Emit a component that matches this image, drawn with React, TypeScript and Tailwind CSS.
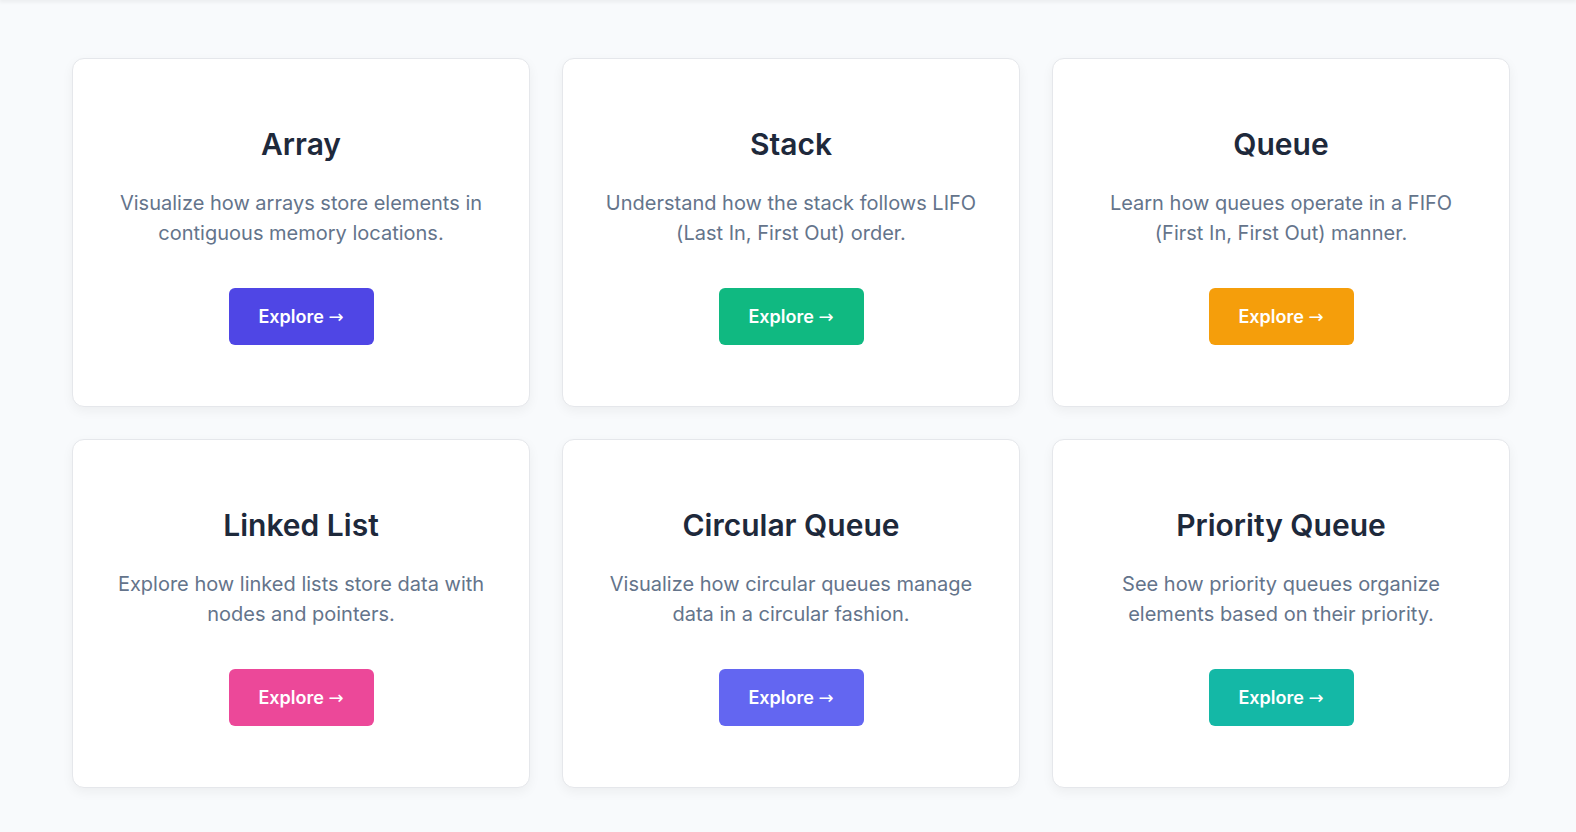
import React from 'react';

interface ITopic {
  title: string;
  description: string;
  color: string;
}

const topics: ITopic[] = [
  {
    title: 'Array',
    description: 'Visualize how arrays store elements in contiguous memory locations.',
    color: 'bg-[#4f46e5]',
  },
  {
    title: 'Stack',
    description: 'Understand how the stack follows LIFO (Last In, First Out) order.',
    color: 'bg-[#10b981]',
  },
  {
    title: 'Queue',
    description: 'Learn how queues operate in a FIFO (First In, First Out) manner.',
    color: 'bg-[#f59e0b]',
  },
  {
    title: 'Linked List',
    description: 'Explore how linked lists store data with nodes and pointers.',
    color: 'bg-[#ec4899]',
  },
  {
    title: 'Circular Queue',
    description: 'Visualize how circular queues manage data in a circular fashion.',
    color: 'bg-[#6366f1]',
  },
  {
    title: 'Priority Queue',
    description: 'See how priority queues organize elements based on their priority.',
    color: 'bg-[#14b8a6]',
  },
];

const TopicCard: React.FC<ITopic> = ({ title, description, color }) => {
  return (
    <div className="flex flex-col items-center h-[349px] pt-[67px] px-10 bg-white border border-[#e5e7eb] rounded-xl shadow-[0_4px_12px_rgba(0,0,0,0.05)] text-center">
      <h2 className="text-[30px] leading-9 font-semibold text-[#1e293b]">{title}</h2>
      <p className="mt-[26px] max-w-[380px] text-xl leading-[30px] text-[#64748b]">
        {description}
      </p>
      <button
        className={`mt-10 h-[57px] w-[145px] rounded-md text-white text-lg font-semibold ${color}`}
      >
        Explore{' '}
        <span className="font-['DejaVu_Sans',sans-serif] font-normal">→</span>
      </button>
    </div>
  );
};

export default function App() {
  return (
    <div className="min-h-[832px] bg-[#f8fafc] font-['Inter',sans-serif]">
      <div className="h-0 shadow-[0_0_4px_1px_rgba(0,0,0,0.12)]" />
      <div className="grid grid-cols-3 gap-8 pl-[72px] pr-[66px] pt-[58px] pb-10">
        {topics.map((t) => (
          <TopicCard key={t.title} {...t} />
        ))}
      </div>
    </div>
  );
}
